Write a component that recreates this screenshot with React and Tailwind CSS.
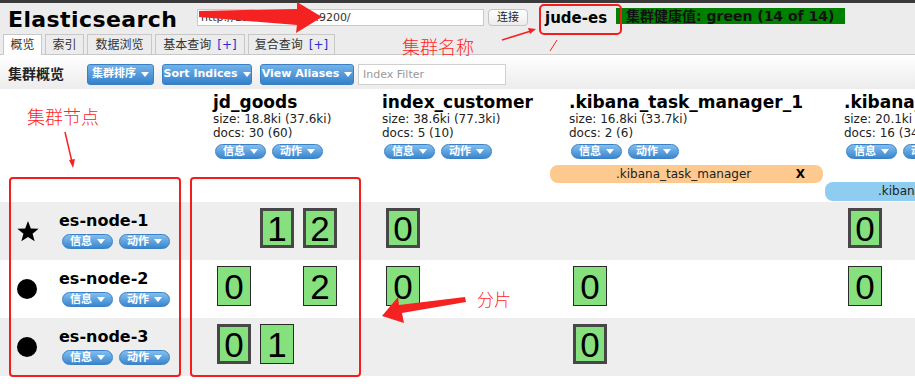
import React from "react";

const Caret = () => (
  <svg width="8" height="5" viewBox="0 0 8 5" className="ml-[5px]">
    <path d="M0 0h8L4 5z" fill="#fff" />
  </svg>
);

function Pill({ label }) {
  return (
    <div className="w-[51px] h-[15px] rounded-full border border-[#3b80c4] bg-linear-to-b from-[#82bfee] to-[#3986cf] text-white text-[11px] font-bold flex items-center justify-center leading-none">
      {label}
      <Caret />
    </div>
  );
}

function ToolButton({ label, className }) {
  return (
    <div className={"h-[21px] rounded-[3px] border border-[#3a7fc2] bg-linear-to-b from-[#72b2e8] to-[#3381cb] text-white text-[11px] font-bold flex items-center justify-center " + className}>
      {label}
      <Caret />
    </div>
  );
}

function Shard({ n, primary }) {
  return (
    <div
      className={
        primary
          ? "w-[34px] h-[40px] border-[3px] border-[#474747] bg-[#86e07e] flex items-center justify-center font-['Liberation_Sans',sans-serif] text-[35px] leading-none text-black"
          : "w-[34px] h-[40px] border border-[#2a2a2a] bg-[#86e07e] flex items-center justify-center font-['Liberation_Sans',sans-serif] text-[35px] leading-none text-black"
      }
    >
      {n}
    </div>
  );
}

const columns = [
  { name: "jd_goods", size: "size: 18.8ki (37.6ki)", docs: "docs: 30 (60)", w: "w-[169px]" },
  { name: "index_customer", size: "size: 38.6ki (77.3ki)", docs: "docs: 5 (10)", w: "w-[187px]" },
  { name: ".kibana_task_manager_1", size: "size: 16.8ki (33.7ki)", docs: "docs: 2 (6)", w: "w-[275px]" },
  { name: ".kibana_1", size: "size: 20.1ki (40.2ki)", docs: "docs: 16 (34)", w: "w-[220px]" },
];

// each shard slot: null = empty, "P" = primary, "R" = replica
const nodes = [
  { name: "es-node-1", master: true, bg: "bg-[#eeeeee]", shards: [[null, "P", "P"], ["P"], [], ["P"]] },
  { name: "es-node-2", master: false, bg: "bg-white", shards: [["R", null, "R"], ["R"], ["R"], ["R"]] },
  { name: "es-node-3", master: false, bg: "bg-[#eeeeee]", shards: [["P", "R"], [], ["P"], []] },
];

const tabs = [
  { label: "概览", w: "w-[39px]", active: true },
  { label: "索引", w: "w-[39px]" },
  { label: "数据浏览", w: "w-[65px]" },
  { label: "基本查询", w: "w-[90px]", plus: true },
  { label: "复合查询", w: "w-[87px]", plus: true },
];

function App() {
  return (
    <div className="relative w-[915px] h-[384px] overflow-hidden bg-white text-black font-['DejaVu_Sans','Noto_Sans_CJK_SC',sans-serif]">
      <div className="h-[3px] bg-[#3a3a3a]" />

      {/* header */}
      <div className="bg-[#ececec] border-b border-[#c8c8c8]">
        <div className="flex h-[31px]">
          <div className="w-[197px] pl-[8px] pt-[4px] text-[22px] leading-[26px] font-bold tracking-[0.4px]">
            Elasticsearch
          </div>
          <div className="mt-[6px] w-[287px] h-[17px] bg-white border border-[#c9c9c9] text-[11px] leading-[15px] pl-[3px] text-[#333]">
            http://192.168.1.100:9200/
          </div>
          <div className="ml-[4px] mt-[6px] w-[40px] h-[17px] rounded-[4px] border border-[#c4c4c4] bg-linear-to-b from-white to-[#ececec] text-[11px] leading-none flex items-center justify-center text-[#222]">
            连接
          </div>
          <div className="w-[88px] pl-[17px] pt-[7px] text-[15px] leading-[16px] font-bold">jude-es</div>
          <div className="mt-[5px] w-[229px] h-[16px] bg-[#008000] pl-[10px] text-[14px] leading-[16px] font-bold text-[#111]">
            集群健康值: green (14 of 14)
          </div>
        </div>
        <div className="flex items-end h-[20px] pl-[3px] gap-[3px]">
          {tabs.map((t) => (
            <div
              key={t.label}
              className={
                (t.active ? "bg-white h-[21px] -mb-px " : "bg-[#ececec] h-[20px] ") +
                t.w +
                " border border-b-0 border-[#c8c8c8] text-[12px] text-[#333] flex items-center justify-center"
              }
            >
              {t.label}
              {t.plus && <span className="ml-[6px] text-[#2b2bd6]">[+]</span>}
            </div>
          ))}
        </div>
      </div>

      {/* toolbar */}
      <div className="h-[34px] bg-linear-to-b from-white to-[#ececec] flex items-start pt-[9px] pl-[8px]">
        <div className="w-[79px] text-[14px] font-bold leading-[21px] text-[#222]">集群概览</div>
        <ToolButton label="集群排序" className="w-[67px]" />
        <ToolButton label="Sort Indices" className="w-[90px] ml-[8px]" />
        <ToolButton label="View Aliases" className="w-[94px] ml-[8px]" />
        <div className="ml-[4px] w-[148px] h-[21px] bg-white border border-[#cfcfcf] text-[11px] leading-[19px] pl-[4px] text-[#999]">
          Index Filter
        </div>
      </div>

      {/* index headers */}
      <div className="flex">
        <div className="w-[205px] shrink-0" />
        {columns.map((c) => (
          <div key={c.name} className={c.w + " shrink-0 pt-[3px] pl-[8px]"}>
            <div className="text-[17px] leading-[20px] font-bold whitespace-nowrap">{c.name}</div>
            <div className="text-[12px] leading-[14px] whitespace-nowrap text-[#222]">{c.size}</div>
            <div className="text-[12px] leading-[14px] whitespace-nowrap text-[#222]">{c.docs}</div>
            <div className="flex gap-[6px] mt-[4px] ml-[2px]">
              <Pill label="信息" />
              <Pill label="动作" />
            </div>
          </div>
        ))}
      </div>

      {/* aliases */}
      <div className="pt-[6px] mb-[1px]">
        <div className="ml-[550px] w-[273px] h-[18px] rounded-[8px] bg-[#fdc98f] flex items-center justify-between pl-[66px] pr-[18px] text-[12px] text-[#222]">
          <span>.kibana_task_manager</span>
          <span className="font-bold text-black">X</span>
        </div>
        <div className="ml-[825px] w-[140px] h-[19px] -mt-px rounded-l-[8px] bg-[#8ecdf0] pl-[53px] text-[12px] leading-[19px] text-[#222] whitespace-nowrap">
          .kibana
        </div>
      </div>

      {/* node rows */}
      {nodes.map((n) => (
        <div key={n.name} className={"flex h-[58px] " + n.bg}>
          <div className="w-[205px] shrink-0 flex items-center">
            <div className="w-[59px] pl-[17px] flex items-center">
              {n.master ? (
                <svg width="22" height="21" viewBox="0 0 24 23">
                  <path d="M12 0l3.1 8.1 8.6.4-6.7 5.4 2.3 8.4L12 17.5l-7.3 4.8 2.3-8.4L.3 8.5l8.6-.4z" fill="#000" />
                </svg>
              ) : (
                <div className="w-[20px] h-[20px] rounded-full bg-black" />
              )}
            </div>
            <div className="-mt-[2px]">
              <div className="text-[16px] leading-[18px] font-bold">{n.name}</div>
              <div className="flex gap-[6px] mt-[4px] ml-[3px]">
                <Pill label="信息" />
                <Pill label="动作" />
              </div>
            </div>
          </div>
          {columns.map((c, ci) => (
            <div key={c.name} className={c.w + " shrink-0 pt-[6px] pl-[12px] flex gap-[9px]"}>
              {n.shards[ci].map((s, si) =>
                s ? <Shard key={si} n={si} primary={s === "P"} /> : <div key={si} className="w-[34px]" />
              )}
            </div>
          ))}
        </div>
      ))}

      {/* annotations */}
      <div className="absolute left-[402px] top-[33px] text-[18px] font-light text-[#ff2424] font-['Noto_Sans_CJK_SC',sans-serif]">集群名称</div>
      <div className="absolute left-[27px] top-[103px] text-[18px] font-light text-[#ff2424] font-['Noto_Sans_CJK_SC',sans-serif]">集群节点</div>
      <div className="absolute left-[477px] top-[286px] text-[17px] font-light text-[#ff2424] font-['Noto_Sans_CJK_SC',sans-serif]">分片</div>
      <div className="absolute left-[539px] top-[4px] w-[83px] h-[31px] border-2 border-[#f51c1c] rounded-[5px]" />
      <div className="absolute left-[9px] top-[177px] w-[172px] h-[200px] border-2 border-[#f51c1c] rounded-[4px]" />
      <div className="absolute left-[190px] top-[177px] w-[171px] h-[200px] border-2 border-[#f51c1c] rounded-[4px]" />

      <svg className="absolute left-0 top-0 pointer-events-none" width="915" height="384" viewBox="0 0 915 384">
        <polygon points="199,11 297,9 297,2 322,17 296,33 297,25 199,17" fill="#f52222" />
        <line x1="502" y1="40" x2="531" y2="31" stroke="#f52222" strokeWidth="1.5" />
        <polygon points="536,29 528,28 530,34" fill="#f52222" />
        <line x1="550" y1="51" x2="557" y2="40" stroke="#f52222" strokeWidth="1" />
        <line x1="65" y1="132" x2="72" y2="162" stroke="#f52222" strokeWidth="1.5" />
        <polygon points="73,168 69,160 75,159" fill="#f52222" />
        <polygon points="382,316 398,297 399,305 465,297 466,302 402,313 404,323" fill="#f52222" />
      </svg>
    </div>
  );
}

export default App;
